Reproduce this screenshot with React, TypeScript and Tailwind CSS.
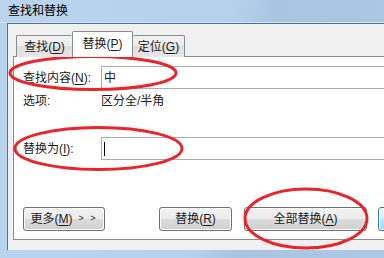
// @ts-nocheck
const U = ({ k }: { k: string }) => <span className="underline underline-offset-2">{k}</span>

const BTN =
  'h-[24px] rounded-[3px] border border-[#707070] bg-[linear-gradient(#f2f2f2_0%,#ebebeb_50%,#dddddd_50%,#cfcfcf_100%)] shadow-[inset_0_0_0_1px_#fbfbfb] flex items-center justify-center shrink-0'

const TAB =
  'h-[22px] border border-[#898c95] border-b-0 rounded-t-[2px] bg-[linear-gradient(#f3f3f3_0%,#ebebeb_50%,#dedede_50%,#e6e6e6_100%)] flex items-center justify-center shrink-0'

export default function App() {
  return (
    <div className="relative w-[384px] h-[258px] overflow-hidden bg-[linear-gradient(100deg,#b9d4ee_0%,#b6d1ec_55%,#a8c4e0_65%,#adc8e4_100%)] font-['Liberation_Sans','Noto_Sans_CJK_SC',sans-serif] text-[12px] text-[#1b1b1b]">
      {/* Title bar */}
      <div className="h-[23px] flex items-center pl-[8px] text-black border-b border-[#cfe2f5]">
        查找和替换
      </div>

      {/* Window body */}
      <div className="flex">
        <div className="w-[7px] shrink-0" />
        <div className="flex-1 h-[227px] overflow-hidden bg-[#f0f0f0] border-t border-l border-[#5f6f83] pl-[5px] pt-[8px]">
          {/* Tabs */}
          <div className="relative z-10 flex items-end h-[25px] pl-[3px] -mb-px">
            <div className={TAB + ' w-[56px] border-r-0'}>
              查找(<U k="D" />)
            </div>
            <div className="w-[61px] h-[26px] border border-[#898c95] border-b-0 rounded-t-[2px] bg-white flex items-center justify-center shrink-0 pb-[2px]">
              替换(<U k="P" />)
            </div>
            <div className={TAB + ' w-[52px] border-l-0'}>
              定位(<U k="G" />)
            </div>
          </div>

          {/* Tab panel */}
          <div className="w-[400px] h-[184px] border border-[#898c95] bg-white pl-[9px] pt-[9px]">
            <div className="flex items-center h-[23px]">
              <div className="w-[78px] shrink-0">
                查找内容(<U k="N" />):
              </div>
              <div className="flex-1 h-[23px] border border-[#a9abb0] flex items-center pl-[2px]">中</div>
            </div>

            <div className="flex items-center h-[18px] mt-[3px]">
              <div className="w-[78px] shrink-0">选项:</div>
              <div>区分全/半角</div>
            </div>

            <div className="flex items-center h-[23px] mt-[27px]">
              <div className="w-[78px] shrink-0">
                替换为(<U k="I" />):
              </div>
              <div className="flex-1 h-[23px] border border-[#a9abb0] flex items-center pl-[2px]">
                <div className="w-px h-[14px] bg-black" />
              </div>
            </div>

            <div className="flex mt-[47px]">
              <div className={BTN + ' w-[82px] gap-[6px]'}>
                <span>
                  更多(<U k="M" />)
                </span>
                <span className="text-[9px] tracking-[2px]">&gt; &gt;</span>
              </div>
              <div className={BTN + ' w-[73px] ml-[54px]'}>
                替换(<U k="R" />)
              </div>
              <div className={BTN + ' w-[123px] ml-[12px]'}>
                全部替换(<U k="A" />)
              </div>
              <div className="h-[24px] w-[90px] ml-[11px] rounded-[3px] border border-[#3c7fb1] bg-[linear-gradient(#eaf6fd_0%,#d9f0fc_50%,#bee6fd_50%,#a7d9f5_100%)] shadow-[inset_0_0_0_1px_#ffffff] shrink-0" />
            </div>
          </div>
        </div>
      </div>

      {/* Red marker ellipses */}
      <svg className="absolute inset-0 pointer-events-none" width="384" height="258" viewBox="0 0 384 258">
        <g fill="none" stroke="#e7262c" strokeWidth="3">
          <ellipse cx="93" cy="73" rx="83" ry="16.5" />
          <ellipse cx="98.5" cy="148.5" rx="83.5" ry="21" />
          <ellipse cx="306" cy="218.5" rx="61" ry="29.5" />
        </g>
      </svg>
    </div>
  )
}
